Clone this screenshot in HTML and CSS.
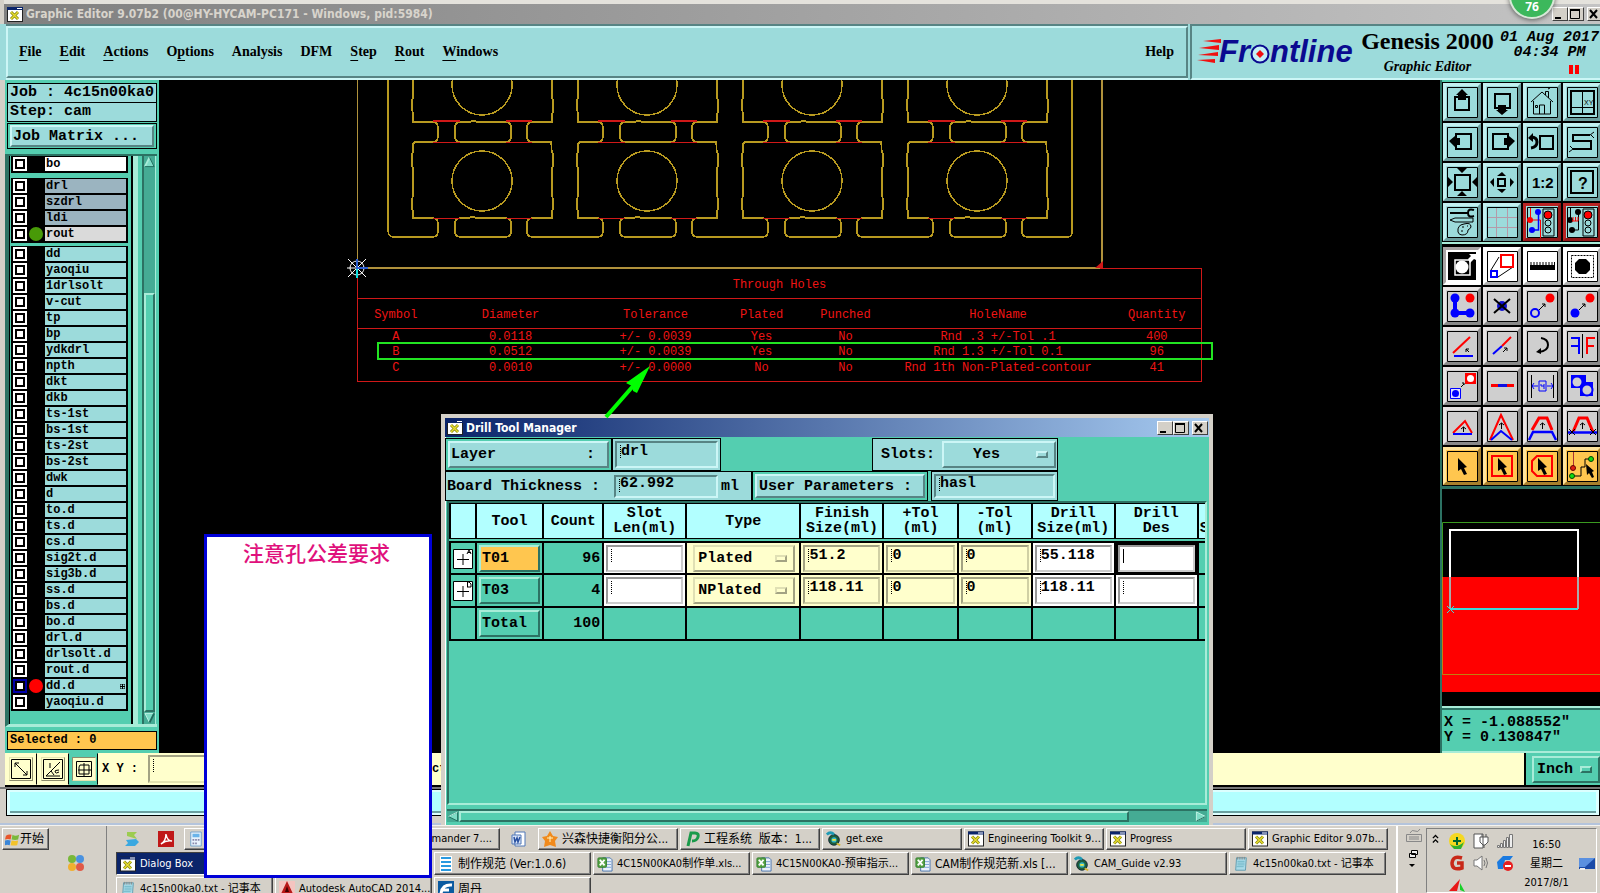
FILE: index.html
```html
<!DOCTYPE html>
<html lang="en">
<head>
<meta charset="utf-8">
<title>Graphic Editor 9.07b2</title>
<link rel="stylesheet" href="styles.css">
</head>
<body>
<svg class="defs" aria-hidden="true">
  <defs>
    <symbol id="xwin" viewBox="0 0 16 15"><rect x=".5" y=".5" width="15" height="14" fill="#fff" stroke="#222"/><rect width="16" height="3" fill="#0a246a"/><rect x="10" y="1" width="5" height="1" fill="#fff"/><path d="M4 5l7 7M11 5l-7 7" stroke="#8a8a10" stroke-width="3"/><path d="M4 5l7 7M11 5l-7 7" stroke="#e6dc30" stroke-width="1.4"/></symbol>
    <symbol id="notepad" viewBox="0 0 16 18"><path d="M3 2h11l-1 14H2z" fill="#a9dbe8" stroke="#5d98ad"/><path d="M4 6h8M4 8h8M4 10h8M3 12h8" stroke="#6fb4c6"/><path d="M4 1v3M6 1v3M8 1v3M10 1v3M12 1v3" stroke="#888"/></symbol>
    <symbol id="excel" viewBox="0 0 17 17"><path d="M6 2h8l2 2v12H6z" fill="#e9f1fb" stroke="#4b75ad"/><path d="M9 6h6M9 9h6M9 12h6" stroke="#7aa0d4"/><rect x="1" y="2" width="9" height="10" rx="1" fill="#5aa548" stroke="#2d7d28"/><path d="M3 4l5 6M8 4l-5 6" stroke="#fff" stroke-width="2"/></symbol>
    <symbol id="gecko" viewBox="0 0 18 18"><circle cx="9" cy="10" r="6" fill="#1d5e3c" stroke="#123" /><circle cx="9" cy="10" r="3" fill="#33b5c9"/><path d="M7 10h4" stroke="#f2e640" stroke-width="2"/><path d="M1 4q4-4 8 0" stroke="#1e9ab5" stroke-width="3" fill="none"/><path d="M12 14l4 2" stroke="#d9b52a" stroke-width="2"/></symbol>
    <g id="cell">
      <path class="route" d="M413 80V98l-1 2v10l1 3V122H432q6 0 6 5V137q0 5-6 5H415l-2 2V152l-1 2v12l1 2V196l-1 3v10l1 2V218H432q6 0 6 5V232q0 5-6 5H426"/>
      <path class="route" d="M552 80V98l1 2v12l-1 2V122H533q-6 0-6 5V137q0 5 6 5H551l1 10l1 2v12l-1 2V196l1 3v10l-1 2V218H533q-6 0-6 5V232q0 5 6 5H540"/>
      <path class="route" d="M461 122h9l2-1h3l2 1H505q6 0 6 5V137q0 5-6 5H461q-6 0-6-5V127q0-5 6-5zM461 218h8l2-1h3l2 1H505q6 0 6 5V232q0 5-6 5H461q-6 0-6-5V223q0-5 6-5z"/>
      <circle class="route" cx="482" cy="85" r="30"/><circle class="route" cx="482" cy="181" r="30"/>
      <path class="cut" d="M433 142H460M506 142H532M433 218H460M506 218H532"/>
      <path class="cut wide" d="M433 121H460M506 121H532"/>
    </g>
  </defs>
</svg>
<div class="desktop">
  <header class="titlebar">
    <svg class="winicon"><use href="#xwin"/></svg>
    <h1>Graphic Editor 9.07b2 (00@HY-HYCAM-PC171 - Windows, pid:5984)</h1>
    <div class="winbtns"><button aria-label="Minimize"><svg viewBox="0 0 12 12"><path d="M2 10h6" stroke-width="2"/></svg></button><button aria-label="Maximize"><svg viewBox="0 0 12 12"><path d="M1.500 2v8.500h9V2" /><path d="M1 2h10" stroke-width="2"/></svg></button><button class="close" aria-label="Close"><svg viewBox="0 0 12 12"><path d="M2 2l7 8M9 2l-7 8" stroke-width="2"/></svg></button></div>
    <div class="bubble">76</div>
  </header>

  <div class="top">
    <nav class="menubar">
      <a href="#"><u>F</u>ile</a><a href="#"><u>E</u>dit</a><a href="#"><u>A</u>ctions</a><a href="#">O<u>p</u>tions</a><a href="#">Analysis</a><a href="#">DFM</a><a href="#"><u>S</u>tep</a><a href="#"><u>R</u>out</a><a href="#"><u>W</u>indows</a><a class="help" href="#">Help</a>
    </nav>
    <div class="brand">
      <svg class="logo" viewBox="0 0 162 34" role="img" aria-label="Frontline">
        <path d="M6 6l18-2v4zM2 13l20-3v5zM1 20l20-3v4zM0 25l18-1v4z" fill="#f01010"/>
        <text x="22" y="27">Fr</text><text x="73" y="27">ntline</text>
        <circle cx="63" cy="19" r="8.500" fill="#c4f0f4" stroke="#0a0a90" stroke-width="2"/><path d="M63 15l4 4-4 4-4-4z" fill="#f01010"/>
      </svg>
      <div class="product"><strong>Genesis 2000</strong><em>Graphic Editor</em></div>
      <div class="date"><span>01 Aug 2017</span><span>04:34 PM</span><svg width="11" height="9"><path d="M0 0h4v9H0zM6 0h4v9H6z" fill="#f00"/></svg></div>
    </div>
  </div>

  <main class="work">
    <aside class="left">
      <div class="job"><p>Job : 4c15n00ka0</p><p>Step: cam</p></div>
      <div class="matrix"><button>Job Matrix ...</button></div>
      <div class="layers">
        <div class="listwrap">
          <ul class="white"><li><label><input type="checkbox"><i></i><span>bo</span></label></li></ul>
          <ul class="drill"><li><label><input type="checkbox"><i></i><span>drl</span></label></li><li><label><input type="checkbox"><i></i><span>szdrl</span></label></li><li><label><input type="checkbox"><i></i><span>ldi</span></label></li><li class="rout"><label><input type="checkbox"><i class="green"></i><span>rout</span></label></li></ul>
          <ul>
            <li><label><input type="checkbox"><i></i><span>dd</span></label></li>
            <li><label><input type="checkbox"><i></i><span>yaoqiu</span></label></li>
            <li><label><input type="checkbox"><i></i><span>1drlsolt</span></label></li>
            <li><label><input type="checkbox"><i></i><span>v-cut</span></label></li>
            <li><label><input type="checkbox"><i></i><span>tp</span></label></li>
            <li><label><input type="checkbox"><i></i><span>bp</span></label></li>
            <li><label><input type="checkbox"><i></i><span>ydkdrl</span></label></li>
            <li><label><input type="checkbox"><i></i><span>npth</span></label></li>
            <li><label><input type="checkbox"><i></i><span>dkt</span></label></li>
            <li><label><input type="checkbox"><i></i><span>dkb</span></label></li>
            <li><label><input type="checkbox"><i></i><span>ts-1st</span></label></li>
            <li><label><input type="checkbox"><i></i><span>bs-1st</span></label></li>
            <li><label><input type="checkbox"><i></i><span>ts-2st</span></label></li>
            <li><label><input type="checkbox"><i></i><span>bs-2st</span></label></li>
            <li><label><input type="checkbox"><i></i><span>dwk</span></label></li>
            <li><label><input type="checkbox"><i></i><span>d</span></label></li>
            <li><label><input type="checkbox"><i></i><span>to.d</span></label></li>
            <li><label><input type="checkbox"><i></i><span>ts.d</span></label></li>
            <li><label><input type="checkbox"><i></i><span>cs.d</span></label></li>
            <li><label><input type="checkbox"><i></i><span>sig2t.d</span></label></li>
            <li><label><input type="checkbox"><i></i><span>sig3b.d</span></label></li>
            <li><label><input type="checkbox"><i></i><span>ss.d</span></label></li>
            <li><label><input type="checkbox"><i></i><span>bs.d</span></label></li>
            <li><label><input type="checkbox"><i></i><span>bo.d</span></label></li>
            <li><label><input type="checkbox"><i></i><span>drl.d</span></label></li>
            <li><label><input type="checkbox"><i></i><span>drlsolt.d</span></label></li>
            <li><label><input type="checkbox"><i></i><span>rout.d</span></label></li>
            <li><label><input type="checkbox" checked><i class="red"></i><span>dd.d<svg width="5" height="5"><path d="M0 0h5v5H0zM2.500 0v5M0 2.500h5" fill="none" stroke="#000"/></svg></span></label></li>
            <li><label><input type="checkbox"><i></i><span>yaoqiu.d</span></label></li>
          </ul>
        </div>
        <div class="vscroll"><svg viewBox="0 0 12 12"><path d="M6 1L1 11H11z" fill="#7fdcc6"/><path d="M6 1L1 11" stroke="#a8ecd8" stroke-width="2"/><path d="M1 11H11L6 1" stroke="#1f6a5a" fill="none"/></svg><div class="trough"><b></b></div><svg viewBox="0 0 12 12"><path d="M1 1H11L6 11z" fill="#7fdcc6"/><path d="M11 1H1L6 11" stroke="#c4f5e8" fill="none"/><path d="M11 1L6 11" stroke="#1f6a5a" stroke-width="2"/></svg></div>
      </div>
      <p class="selected">Selected : 0</p>
    </aside>

    <section class="canvas" aria-label="Board view">
      <table class="holes">
        <colgroup><col class="h1"><col class="h2"><col class="h3"><col class="h4"><col class="h5"><col class="h6"><col class="h7"></colgroup>
        <thead><tr><th colspan="7">Through Holes</th></tr><tr><th>Symbol</th><th>Diameter</th><th>Tolerance</th><th>Plated</th><th>Punched</th><th>HoleName</th><th>Quantity</th></tr></thead>
        <tbody><tr><td>A</td><td>0.0118</td><td>+/- 0.0039</td><td>Yes</td><td>No</td><td>Rnd .3 +/-Tol .1</td><td>400</td></tr><tr><td>B</td><td>0.0512</td><td>+/- 0.0039</td><td>Yes</td><td>No</td><td>Rnd 1.3 +/-Tol 0.1</td><td>96</td></tr><tr><td>C</td><td>0.0010</td><td>+/- 0.0000</td><td>No</td><td>No</td><td>Rnd 1th Non-Plated-contour</td><td>41</td></tr></tbody>
      </table>
      <svg class="board"><g transform="translate(-159 -80)">
        <path class="panel thin" d="M357.500 80V264"/><path class="panel" d="M358 268H1097q5 0 5-5V80"/>
        <path d="M1095 268h8v-7z" fill="#d01818"/>
        <path class="route" d="M388 80V230q0 7 5 7H428M538 237H594M703 237H759M868 237H924M1033 237H1067q5 0 5-5V80"/>
        <use href="#cell"/><use href="#cell" x="165"/><use href="#cell" x="330"/><use href="#cell" x="495"/>
        <g fill="none"><circle cx="357" cy="268" r="7" stroke="#fff"/><path d="M348 259l18 18M366 259l-18 18M347 268h10" stroke="#fff"/><path d="M357 268v10" stroke="#10e0e0" stroke-width="2"/><path d="M357 259v9h11" stroke="#3060d0" stroke-width="2"/></g>
      </g></svg>
    </section>

    <aside class="right">
      <div class="tools view">
        <button aria-label="Pan up"><svg viewBox="3 3 32 32"><path class="fr" d="M4.500 4.500h30v30h-30z"/><path class="k2" d="M12 14h14v13H12z"/><path class="f" d="M19 6l6 6h-2v5h-8v-5h-2z"/></svg></button>
        <button aria-label="Pan down"><svg viewBox="3 3 32 32"><path class="fr" d="M4.500 4.500h30v30h-30z"/><path class="k2" d="M12 11h15v14H12z"/><path class="f" d="M15 22h8v5h2l-6 5-6-5h2z"/></svg></button>
        <button aria-label="Home"><svg viewBox="3 3 32 32"><path class="fr" d="M4.500 4.500h30v30h-30z"/><path class="k" d="M8 19L19 9l11 10M10.500 18v13h17V18M16.500 31v-9h5v9M12.500 22.500h2v2h-2zM22.500 12V8.500h3V15M25 6l2-1"/></svg></button>
        <button aria-label="Zoom XY"><svg viewBox="3 3 32 32"><path class="fr" d="M4.500 4.500h30v30h-30z"/><path class="k2" d="M8 8h23v23H8z"/><path class="k" d="M19.500 8v23M8 24.500h23"/><text class="tiny" x="21" y="22">XY</text></svg></button>
        <button aria-label="Pan left"><svg viewBox="3 3 32 32"><path class="fr" d="M4.500 4.500h30v30h-30z"/><path class="k2" d="M13 11h15v15H13z"/><path class="f" d="M6 18l6-5v2h5v7h-5v2z"/></svg></button>
        <button aria-label="Pan right"><svg viewBox="3 3 32 32"><path class="fr" d="M4.500 4.500h30v30h-30z"/><path class="k2" d="M10 11h15v15H10z"/><path class="f" d="M32 18l-6-5v2h-5v7h5v2z"/></svg></button>
        <button aria-label="Previous view"><svg viewBox="3 3 32 32"><path class="fr" d="M4.500 4.500h30v30h-30z"/><path class="k2" d="M17 13h13v13H17z"/><path d="M8 14q6 0 6 5t-6 6" fill="none" stroke="#000" stroke-width="3"/><path class="f" d="M5 15l5-5v9z"/></svg></button>
        <button aria-label="Snake"><svg viewBox="3 3 32 32"><path class="fr" d="M4.500 4.500h30v30h-30z"/><path class="k2" d="M10 26H28V18H10V12H27"/><path class="k" d="M27 12l4-3M28 12l3 3M10 26l-4 3M10 26l-3-3"/></svg></button>
        <button aria-label="Fit"><svg viewBox="3 3 32 32"><path class="fr" d="M4.500 4.500h30v30h-30z"/><path class="k2" d="M12 12h15v15H12z"/><path class="f" d="M14 5h10l-5 5zM14 33h10l-5-5zM5 14v10l5-5zM34 14v10l-5-5z"/></svg></button>
        <button aria-label="Zoom out"><svg viewBox="3 3 32 32"><path class="fr" d="M4.500 4.500h30v30h-30z"/><path class="k2" d="M15 16h7v7h-7z"/><path class="f" d="M14 13h9l-4-4zM14 26h9l-4 4zM11 15v9l-4-5zM27 15v9l4-5z"/></svg></button>
        <button aria-label="Scale 1:2"><svg viewBox="3 3 32 32"><path class="fr" d="M4.500 4.500h30v30h-30z"/><text class="ratio" x="9" y="25">1:2</text></svg></button>
        <button aria-label="Help"><svg viewBox="3 3 32 32"><path class="fr" d="M4.500 4.500h30v30h-30z"/><path class="k2" d="M8 8h22v22H8z"/><text class="quest" x="15" y="26">?</text></svg></button>
        <button aria-label="Settings"><svg viewBox="3 3 32 32"><path class="fr" d="M4.500 4.500h30v30h-30z"/><path class="k2" d="M7 10h18M31 7q-6-2-6 3t6 3"/><path class="k" d="M7 17l5-2h18v4H12zM15 29q-1-7 6-8 7-2 7 3-1 2-3 3 0 5-6 5-3 0-4-3M18 28h2M19 24h2M24 23h1"/></svg></button>
        <button aria-label="Grid"><svg viewBox="3 3 32 32"><path class="fr" d="M4.500 4.500h30v30h-30z"/><path d="M13.500 5v29M24.500 5v29M5 14.500h29M5 24.500h29" stroke="#b59aa8"/></svg></button>
        <button class="alert" aria-label="Online check"><svg viewBox="3 3 32 32"><path class="fr" d="M4.500 4.500h30v30h-30z"/><path d="M7.500 5v12h10v18" fill="none" stroke="#f00"/><circle cx="7" cy="17" r="3" fill="#f00"/><path d="M15.500 9v18h-6" fill="none" stroke="#00f" stroke-width="1.500"/><circle cx="15" cy="9" r="3" fill="#00f"/><circle cx="9" cy="27" r="3" fill="#00f"/><path class="k" d="M20 6h11v27H20z"/><circle cx="25" cy="12" r="4" fill="#f00" stroke="#000"/><circle class="k" cx="25" cy="20" r="3"/><circle class="k" cx="25" cy="27" r="3"/></svg></button>
        <button class="alert" aria-label="Net check"><svg viewBox="3 3 32 32"><path class="fr" d="M4.500 4.500h30v30h-30z"/><path class="k" d="M7.500 5v12M15.500 9v18h-6"/><circle cx="7" cy="17" r="3"/><circle cx="15" cy="9" r="3"/><circle cx="9" cy="27" r="3"/><path d="M9 18h6v-4M10 14v4M12.500 14v4" stroke="#f00" fill="none"/><path class="k" d="M20 6h11v27H20z"/><circle cx="25" cy="12" r="4" fill="#f00" stroke="#000"/><circle class="k" cx="25" cy="20" r="3"/><circle class="k" cx="25" cy="27" r="3"/></svg></button>
      </div>
      <div class="tools edit">
        <button class="w active" aria-label="Zoom window"><svg viewBox="3 3 32 32"><path d="M5 5h28v28H5z"/><path d="M12 13h15v15H12z" fill="#000" stroke="#fff" stroke-width="1.500"/><circle cx="19" cy="20" r="6.500" fill="#fff"/><path d="M25 12l3-3-2-2h7v6l-2-1-4 4z" fill="#fff"/></svg></button>
        <button class="w" aria-label="Scale"><svg viewBox="3 3 32 32"><path class="fr" d="M4.500 4.500h30v30h-30z"/><path class="k" d="M8 23l8-13M15 30l15-10"/><path class="r2" d="M18 8h12v12H18z"/><path class="b2" d="M8 24h6v6H8z"/></svg></button>
        <button class="w" aria-label="Measure"><svg viewBox="3 3 32 32"><path class="fr" d="M4.500 4.500h30v30h-30z"/><path d="M7 18h25v5H7z"/><path d="M8 15v4M11 15v4M14 15v4M17 15v4M20 15v4M23 15v4M26 15v4M29 15v4M31.500 15v4" stroke="#000"/></svg></button>
        <button class="w" aria-label="Feature select"><svg viewBox="3 3 32 32"><path class="fr" d="M4.500 4.500h30v30h-30z"/><path class="k" d="M8.500 8.500h22v22h-22z" stroke-dasharray="2 1"/><path d="M16 12h7l4 4v7l-4 4h-7l-4-4v-7z"/></svg></button>
        <button aria-label="Add"><svg viewBox="3 3 32 32"><path class="fr" d="M4.500 4.500h30v30h-30z"/><path d="M12 11v15h15" fill="none" stroke="#00f" stroke-width="4"/><circle cx="12" cy="11" r="4.500" fill="#00f"/><circle cx="12" cy="26" r="4.500" fill="#00f"/><circle cx="27" cy="26" r="4.500" fill="#00f"/><circle cx="27" cy="11" r="4.500" fill="#f00"/></svg></button>
        <button aria-label="Delete"><svg viewBox="3 3 32 32"><path class="fr" d="M4.500 4.500h30v30h-30z"/><circle cx="19" cy="19" r="5" fill="#1010d0"/><path class="k2" d="M11 12l16 14M27 12l-16 14"/></svg></button>
        <button aria-label="Move"><svg viewBox="3 3 32 32"><path class="fr" d="M4.500 4.500h30v30h-30z"/><circle class="b2" cx="12" cy="26" r="4"/><circle cx="27" cy="11" r="4.500" fill="#f00"/><path class="k" d="M16 23l6-6M19 17h3v3"/></svg></button>
        <button aria-label="Copy"><svg viewBox="3 3 32 32"><path class="fr" d="M4.500 4.500h30v30h-30z"/><circle cx="12" cy="26" r="4.500" fill="#00f"/><circle cx="27" cy="11" r="4.500" fill="#f00"/><path class="k" d="M16 23l6-6M19 17h3v3"/></svg></button>
        <button aria-label="Rotate line"><svg viewBox="3 3 32 32"><path class="fr" d="M4.500 4.500h30v30h-30z"/><path class="b2" d="M11 29h19"/><path class="r2" d="M10 26L27 10"/><path class="k" d="M26 25l-3-3M23 25v-3h3"/></svg></button>
        <button aria-label="Extend"><svg viewBox="3 3 32 32"><path class="fr" d="M4.500 4.500h30v30h-30z"/><path class="b2" d="M10 27l9-8"/><path class="r2" d="M19 19l9-9"/><path class="k" d="M20 25l4-4M21 21h3v3"/></svg></button>
        <button aria-label="Rotate"><svg viewBox="3 3 32 32"><path class="fr" d="M4.500 4.500h30v30h-30z"/><path class="k2" d="M18 11q7 1 7 7t-9 7"/><path d="M13 25l5-4v6z"/></svg></button>
        <button aria-label="Mirror"><svg viewBox="3 3 32 32"><path class="fr" d="M4.500 4.500h30v30h-30z"/><path class="b2" d="M8 11h8v16M8 19h8"/><path class="r2" d="M32 11h-8v16M31 19h-7"/><path class="k" d="M19.500 7v24"/></svg></button>
        <button aria-label="Change symbol"><svg viewBox="3 3 32 32"><path class="fr" d="M4.500 4.500h30v30h-30z"/><path d="M22 6h11v11H22z" fill="#f00"/><circle cx="27.500" cy="11.500" r="3.500" fill="#fff"/><path d="M7.500 21.500h10v10h-10z" fill="#e0e0ff" stroke="#00f"/><circle cx="12.500" cy="26.500" r="3.500" fill="#00f"/><path class="k" d="M18 20l3-3M19 16h2v2"/></svg></button>
        <button aria-label="Join"><svg viewBox="3 3 32 32"><path class="fr" d="M4.500 4.500h30v30h-30z"/><path d="M8 18.500h23" stroke="#f00" stroke-width="3"/><path d="M15 18.500h9" stroke="#1010e0" stroke-width="3"/></svg></button>
        <button aria-label="Spacing"><svg viewBox="3 3 32 32"><path class="fr" d="M4.500 4.500h30v30h-30z"/><path class="k" d="M8.500 8v23M30.500 8v23"/><path d="M9 19h6M24 19h6M11 16l-2 3 2 3M28 16l2 3-2 3M16 14h7v10h-7zM18 17v2h3M21 17v5" stroke="#00f" fill="none"/></svg></button>
        <button aria-label="Merge"><svg viewBox="3 3 32 32"><path class="fr" d="M4.500 4.500h30v30h-30z"/><path d="M8 8h15v7h7v14H17v-8H8z" fill="#00f"/><circle cx="14" cy="15" r="4.500" fill="#d0d0d0"/><circle cx="24" cy="23" r="5.500" fill="#d0d0d0" stroke="#00f" stroke-width="2"/></svg></button>
        <button aria-label="Triangle"><svg viewBox="3 3 32 32"><path class="fr" d="M4.500 4.500h30v30h-30z"/><path d="M10 26L22 14l7 12" fill="none" stroke="#f00" stroke-width="2"/><path class="b2" d="M10 27h19"/><path class="k" d="M20.500 25v-5M18 22l2.500-2 2.500 2"/></svg></button>
        <button aria-label="Peak"><svg viewBox="3 3 32 32"><path class="fr" d="M4.500 4.500h30v30h-30z"/><path d="M7 33L18 8l12 25" fill="none" stroke="#f00" stroke-width="2"/><path class="b2" d="M8 33l10-9 11 9"/><path class="k" d="M18.500 22v-6M16 18l2.500-2 2.500 2"/></svg></button>
        <button aria-label="Trapezoid"><svg viewBox="3 3 32 32"><path class="fr" d="M4.500 4.500h30v30h-30z"/><path d="M9 23l7-12h8l5 12" fill="none" stroke="#f00" stroke-width="3"/><path d="M6 33l4-8h19l4 8" stroke="#00f" stroke-width="2.500" fill="none"/><path class="k" d="M19.500 22v-6M17 18l2.500-2 2.500 2"/></svg></button>
        <button aria-label="Trapezoid base"><svg viewBox="3 3 32 32"><path class="fr" d="M4.500 4.500h30v30h-30z"/><path d="M10 25l6-14h8l6 14" fill="none" stroke="#f00" stroke-width="3"/><path d="M5 25.500h29" stroke="#00f" stroke-width="2.500"/><path class="k" d="M19.500 22v-6M17 18l2.500-2 2.500 2M6 22l6 6M12 22l-6 6M27 22l6 6M33 22l-6 6"/></svg></button>
        <button class="o" aria-label="Select"><svg viewBox="3 3 32 32"><path class="fr" d="M4.500 4.500h30v30h-30z"/><path d="M15 11l9 9-3 1 3 6-3 1-3-6-3 2z"/></svg></button>
        <button class="o" aria-label="Select in frame"><svg viewBox="3 3 32 32"><path class="fr" d="M4.500 4.500h30v30h-30z"/><path class="r2" d="M9 9h20v20H9z"/><path d="M15 11l9 9-3 1 3 6-3 1-3-6-3 2z"/></svg></button>
        <button class="o" aria-label="Select in polygon"><svg viewBox="3 3 32 32"><path class="fr" d="M4.500 4.500h30v30h-30z"/><path class="r2" d="M14 9h15v20H14l-5-5V14z"/><path d="M15 11l9 9-3 1 3 6-3 1-3-6-3 2z"/></svg></button>
        <button class="o" aria-label="Select net"><svg viewBox="3 3 32 32"><path class="fr" d="M4.500 4.500h30v30h-30z"/><path d="M10.500 5v15" stroke="#a33"/><path class="k" d="M10 29h8v-9h4v-8h6"/><circle cx="10" cy="21" r="2.500" fill="#e02010" stroke="#600"/><circle cx="9" cy="29" r="2.500" fill="#1d1" stroke="#040"/><circle cx="28" cy="12" r="2.500" fill="#1d1" stroke="#040"/><path d="M23 17l8 7-2 1 2 5-2 1-3-5-2 2z"/></svg></button>
      </div>
      <div class="overview"><svg><path d="M0 88h160v115H0z" fill="#f00"/><path d="M160 33.500H.5V88" fill="none" stroke="#3a9a20"/><path d="M.5 88v97.500H160" fill="none" stroke="#c08010"/><path d="M8 88V41h128v47" fill="none" stroke="#fff" stroke-width="2"/><path d="M8 88v32M136 88v32" stroke="#aaa" stroke-width="2"/><path d="M8 120h128" stroke="#40d8d8" stroke-width="2"/><path d="M5 117l7 7M12 117l-7 7" stroke="#40d8d8"/></svg></div>
      <div class="coords"><span>X = -1.088552"</span><span>Y = 0.130847"</span></div>
    </aside>
  </main>

  <div class="xybar">
    <button aria-label="Absolute"><svg viewBox="0 0 20 20"><path class="k" d="M.5.5h19v19H.5zM4 4l12 12M4 8V4h4M16 12v4h-4"/></svg></button>
    <button aria-label="Polar"><svg viewBox="0 0 20 20"><path class="k" d="M.5.5h19v19H.5zM3 17L17 3M3 17h14M7 4v5M8 12l3 4M16 11q-5 0-4 2t4 0"/></svg></button>
    <button class="on" aria-label="Grid snap"><svg viewBox="0 0 20 20"><path class="k" d="M2.500 2.500h15v15h-15zM6 6h9v9H5V8zM10 4v13M4 11h13"/></svg></button>
    <label for="xy">X Y :</label><input id="xy" type="text"><span class="hint">ct</span>
    <div class="unit"><span class="pick"><select aria-label="Unit"><option>Inch</option></select></span></div>
  </div>
  <div class="msg"><div></div></div>

  <footer class="taskbar">
    <div class="start"><button><svg viewBox="0 0 16 16"><path d="M1 4q3-2 6-1L6 8Q3 7 0 8z" fill="#e8562a"/><path d="M8 3q3 2 7 0l-1 5q-3 1-7 0z" fill="#7ab83a"/><path d="M0 9q3-1 6 0l-1 5q-3-1-5 0z" fill="#3a86d8"/><path d="M7 9q4 1 7 0l-1 5q-4 1-7 0z" fill="#f2c22a"/></svg>开始</button><svg class="orbs" viewBox="0 0 18 18"><circle cx="5" cy="5" r="4" fill="#78b83a"/><circle cx="13" cy="5" r="4" fill="#4a92e0"/><circle cx="5" cy="13" r="4" fill="#f0b030"/><circle cx="13" cy="13" r="4" fill="#e05a48"/></svg></div>
    <div class="tasks">
      <div class="row"><div class="quick"><svg viewBox="0 0 16 16"><path d="M3 1h10l-3 3 3 4-10-3z" fill="#9ccc50"/><path d="M2 9l10-1 3 3-4 4H1l3-3z" fill="#3aa8e0"/></svg><svg viewBox="0 0 16 16"><path d="M0 0h16v16H0z" fill="#c01818"/><path d="M3 13q5-3 5-10 1 7 6 7-6-1-11 3" fill="none" stroke="#fff" stroke-width="1.500"/></svg></div>
        <button class="calc" aria-label="Calculator"><svg viewBox="0 0 16 18"><path d="M2 1h12v16H2z" fill="#e8f2fc" stroke="#6a9cc8"/><path d="M4 3h8v4H4z" fill="#6ab4ea"/><path d="M4 9h2v2H4zM7 9h2v2H7zM10 9h2v2h-2zM4 13h2v2H4zM7 13h2v2H7z" fill="#88a"/></svg></button>
        <button class="cmd en">mander 7....</button>
        <svg class="word" viewBox="0 0 16 16"><path d="M4 1h10v14H4z" fill="#fff" stroke="#5078b8"/><path d="M1 4h9v9H1z" fill="#d8e4f8" stroke="#5078b8"/><path d="M3 6l1 5 2-4 1 4 2-5" fill="none" stroke="#2850a0" stroke-width="1.500"/></svg>
        <button class="t"><svg viewBox="0 0 16 16"><path d="M8 0l3 5 5 1-3 4 1 6-6-2-6 2 1-6-3-4 5-1z" fill="#f08a1c"/><path d="M5 7h6M8 5v6" stroke="#fff6c0"/></svg><span>兴森快捷衡阳分公...</span></button>
        <button class="t"><svg viewBox="0 0 16 16"><path d="M4 15L7 2h4q4 0 3 4t-6 4" fill="none" stroke="#1a9a4a" stroke-width="3"/></svg><span>工程系统&nbsp; 版本：1...</span></button>
        <button class="t en"><svg><use href="#gecko"/></svg><span>get.exe</span></button>
        <button class="t en"><svg><use href="#xwin"/></svg><span>Engineering Toolkit 9...</span></button>
        <button class="t en"><svg><use href="#xwin"/></svg><span>Progress</span></button>
        <button class="t en"><svg><use href="#xwin"/></svg><span>Graphic Editor 9.07b...</span></button></div>
      <div class="row"><button class="t wide dark en"><svg><use href="#xwin"/></svg><span>Dialog Box</span></button><button class="t wide" aria-label="Window"></button>
        <button class="t wide"><svg viewBox="0 0 16 16"><path d="M2 0h12v16H2z" fill="#fff"/><path d="M3 2h10M3 6h10M3 10h10M3 14h10" stroke="#2a9ae0" stroke-width="2"/></svg><span>制作规范 (Ver:1.0.6)</span></button>
        <button class="t wide en"><svg><use href="#excel"/></svg><span>4C15N00KA0制作单.xls...</span></button>
        <button class="t wide en"><svg><use href="#excel"/></svg><span>4C15N00KA0-预审指示...</span></button>
        <button class="t wide"><svg><use href="#excel"/></svg><span>CAM制作规范新.xls [...</span></button>
        <button class="t wide en"><svg><use href="#gecko"/></svg><span>CAM_Guide v2.93</span></button>
        <button class="t wide en"><svg><use href="#notepad"/></svg><span>4c15n00ka0.txt - 记事本</span></button></div>
      <div class="row"><button class="t wide en"><svg><use href="#notepad"/></svg><span>4c15n00ka0.txt - 记事本</span></button><button class="t wide en"><svg viewBox="0 0 16 16"><path d="M0 0h16v16H0z" fill="#f4c4c0"/><path d="M8 0l7 15-6-3-8 3z" fill="#b81818"/><path d="M8 5l2 6H6z" fill="#400"/></svg><span>Autodesk AutoCAD 2014...</span></button><button class="t wide"><svg viewBox="0 0 16 16"><path d="M0 0h16v16H0z" fill="#0a5aa0"/><path d="M3 13q1-10 11-9M4 9h7" stroke="#fff" stroke-width="3" fill="none"/></svg><span>周丹</span></button></div>
    </div>
    <div class="ime"><svg viewBox="0 0 16 40"><path d="M.5 6.500h15v7H.5zM3 9h10M3 11h10M4 5q2-4 5-2t5-2" fill="none" stroke="#888"/><path d="M5.500 22.500h6v4h-6zM3.500 25.500h6v4h-6z" fill="#eee" stroke="#000"/><path d="M3 36h6l-3 3z"/></svg></div>
    <div class="tray">
      <svg class="chev" viewBox="0 0 8 10"><path d="M1 4l3-3 3 3M1 9l3-3 3 3" fill="none" stroke="#000" stroke-width="1.500"/></svg>
      <div class="icons">
        <svg viewBox="0 0 18 18"><circle cx="9" cy="9" r="8" fill="#f5d820"/><path d="M2 12q6 5 14-2l-3 7H6z" fill="#30b030"/><path d="M9 5v8M5 9h8" stroke="#063" stroke-width="2"/></svg>
        <svg viewBox="0 0 18 18"><path d="M2 2h9v14H2zM8 5h8v5l-3 3h-2l-3-3zM10 2v3M14 2v3M12 13v3" fill="#fff" stroke="#555"/></svg>
        <svg viewBox="0 0 18 18"><path d="M1.500 13.500h2v2h-2zM4.500 11.500h2v4h-2zM7.500 8.500h2v7h-2zM10.500 5.500h2v10h-2zM13.500 2.500h3v13h-3z" fill="#eee" stroke="#777"/></svg>
        <svg viewBox="0 0 18 18"><path d="M14 4Q5 1 4 9q0 8 10 5V9H9" fill="none" stroke="#c82818" stroke-width="3.500"/></svg>
        <svg viewBox="0 0 18 18"><path d="M2 6h3l5-4v14l-5-4H2z" fill="#fff" stroke="#777"/><path d="M12 6q2 3 0 6M14 4q3 5 0 10" fill="none" stroke="#777"/></svg>
        <svg viewBox="0 0 18 18"><path d="M1 8L7 2h10l-3 4H9L7 15H2z" fill="#1a7ae0"/><circle cx="12" cy="12" r="5" fill="#e82020"/><path d="M9 12h6" stroke="#fff" stroke-width="2"/></svg>
        <svg viewBox="0 0 18 18"><path d="M1 15L12 3 9 15z" fill="#e81818"/><path d="M12 7l5 9-5-2z" fill="#18d028"/></svg>
      </div>
      <div class="clock"><span>16:50</span><span>星期二</span><span>2017/8/1</span></div>
      <svg class="mon" viewBox="0 0 16 14"><path d="M0 1h16v11H0z" fill="#1a4aa8"/><path d="M0 1h16L6 10H0z" fill="#5a90e0"/><path d="M1 11h5v2H1z" fill="#eee"/></svg>
    </div>
  </footer>

  <section class="dialog" aria-label="Drill Tool Manager">
    <header class="dtitle"><svg class="winicon"><use href="#xwin"/></svg><h2>Drill Tool Manager</h2><div class="winbtns"><button aria-label="Minimize"><svg viewBox="0 0 12 12"><path d="M2 10h6" stroke-width="2"/></svg></button><button aria-label="Maximize"><svg viewBox="0 0 12 12"><path d="M1.500 2v8.500h9V2"/><path d="M1 2h10" stroke-width="2"/></svg></button><button class="close" aria-label="Close"><svg viewBox="0 0 12 12"><path d="M2 2l7 8M9 2l-7 8" stroke-width="2"/></svg></button></div></header>
    <div class="dbody">
      <div class="params">
        <div class="prow"><div class="box greenbox layerbox"><button class="motif"><span>Layer</span><span>:</span></button></div><div class="box layerval"><input type="text" aria-label="Layer" value="drl"></div><div class="box slots"><label for="slots">Slots:</label><span class="pick"><select id="slots"><option>Yes</option></select></span></div></div>
        <div class="prow second"><div class="box thick"><label for="bt">Board Thickness :</label><input id="bt" type="text" value="62.992"><span>ml</span></div><div class="box greenbox user"><button class="motif">User Parameters :</button></div><div class="box userval"><input type="text" aria-label="User Parameters" value="hasl"></div></div>
      </div>
      <div class="gridview">
        <table class="grid">
          <colgroup><col class="g1"><col class="g2"><col class="g3"><col class="g4"><col class="g5"><col class="g4"><col class="g6"><col class="g6"><col class="g4"><col class="g4"><col class="g4"></colgroup>
          <thead><tr><th></th><th>Tool</th><th>Count</th><th>Slot<br>Len(ml)</th><th>Type</th><th>Finish<br>Size(ml)</th><th>+Tol<br>(ml)</th><th>-Tol<br>(ml)</th><th>Drill<br>Size(ml)</th><th>Drill<br>Des</th><th class="cut-off"><br>Source</th></tr></thead>
          <tbody>
            <tr><td><svg class="sym" viewBox="0 0 20 20"><path d="M.5.5h19v19H.5z" fill="#fff" stroke="#000"/><path class="k" d="M10 5v11M4 10.500h12M14 5l2-4 2 4M15 3.500h3"/></svg></td><td><button class="motif sel">T01</button></td><td class="num">96</td><td class="wh"><input type="text" aria-label="Slot length T01"></td><td class="ye"><span class="pick"><select aria-label="Type T01"><option>Plated</option></select></span></td><td class="ye"><input type="text" aria-label="Finish size T01" value="51.2"></td><td class="ye"><input type="text" aria-label="Plus tolerance T01" value="0"></td><td class="ye"><input type="text" aria-label="Minus tolerance T01" value="0"></td><td class="wh"><input type="text" aria-label="Drill size T01" value="55.118"></td><td class="focus"><input type="text" aria-label="Drill designator T01"></td><td></td></tr>
            <tr><td><svg class="sym" viewBox="0 0 20 20"><path d="M.5.500h19v19H.5z" fill="#fff" stroke="#000"/><path class="k" d="M10 5v11M4 10.500h12M14.500 1v5M14 1h2l2 2v3h-4"/></svg></td><td><button class="motif">T03</button></td><td class="num">4</td><td class="wh"><input type="text" aria-label="Slot length T03"></td><td class="ye"><span class="pick"><select aria-label="Type T03"><option>NPlated</option></select></span></td><td class="ye"><input type="text" aria-label="Finish size T03" value="118.11"></td><td class="ye"><input type="text" aria-label="Plus tolerance T03" value="0"></td><td class="ye"><input type="text" aria-label="Minus tolerance T03" value="0"></td><td class="wh"><input type="text" aria-label="Drill size T03" value="118.11"></td><td class="wh"><input type="text" aria-label="Drill designator T03"></td><td></td></tr>
            <tr><td></td><td><button class="motif">Total</button></td><td class="num">100</td><td></td><td></td><td></td><td></td><td></td><td></td><td></td><td></td></tr>
          </tbody>
        </table>
      </div>
      <div class="hscroll"><svg viewBox="0 0 12 12"><path d="M11 1L1 6l10 5z" fill="#7fdcc6" stroke="#1f6a5a"/><path d="M11 1L1 6" stroke="#c4f5e8"/></svg><div class="trough"><b></b></div><svg viewBox="0 0 12 12"><path d="M1 1l10 5-10 5z" fill="#7fdcc6" stroke="#c4f5e8"/><path d="M1 11l10-5" stroke="#1f6a5a"/></svg></div>
    </div>
  </section>

  <div class="note">注意孔公差要求</div>
  <svg class="marks" aria-hidden="true"><path d="M378 343h834v16H378z" fill="none" stroke="#22e422" stroke-width="2"/><path d="M606 417L634 385" stroke="#0f0" stroke-width="4"/><path d="M650 366l-24 17 6 3 1 5 4 2z" fill="#0f0"/></svg>
</div>
</body>
</html>
```

FILE: styles.css
```css
*, *::after { box-sizing: border-box; }
:root {
  --cyan: #9cdbdb; --cyan-l: #ccf6f6; --cyan-d: #578484;
  --green: #54ceb0; --green-l: #a8ecd8; --green-d: #2c7263;
  --pale: #b2ffff; --yellow: #ffffcc; --yellow-d: #a3a383; --orange: #ffc64f; --face: #d4d0c8;
}
body { margin: 0; background: #000; overflow: hidden; }
body, button, input, select { font: bold 15px/15px "Liberation Mono", monospace; color: #000; }
button, input, select { margin: 0; padding: 0; border: 0; border-radius: 0; background: none; outline: 0; }
button { cursor: pointer; }
p, h1, h2, ul { margin: 0; padding: 0; }
svg { display: block; overflow: hidden; }
.defs { position: absolute; width: 0; height: 0; }
.k { fill: none; stroke: #000; stroke-width: 1; }
.k2 { fill: none; stroke: #000; stroke-width: 2; }
.r2 { fill: none; stroke: #f00; stroke-width: 2; }
.b2 { fill: none; stroke: #00f; stroke-width: 2; }
.fr { fill: none; stroke: #000; }

.desktop { position: relative; display: flex; flex-direction: column; height: 100vh; min-width: 1280px; background: var(--face); overflow: hidden; }

/* title bars */
.titlebar { position: relative; display: flex; align-items: center; height: 24px; padding: 0 0 0 3px; margin: 0 0 0 4px; border-top: 4px solid #e4e2dc; background: linear-gradient(90deg, #808080, #c4c4c4); flex: none; }
.winicon { width: 16px; height: 15px; flex: none; }
.titlebar h1, .dtitle h2 { margin-left: 3px; font: bold 12px/16px "DejaVu Sans Condensed", "Noto Sans", sans-serif; color: #d8d4cc; white-space: nowrap; }
.winbtns { display: flex; margin-left: auto; }
.titlebar .winbtns { margin-right: -3px; }
.winbtns button { width: 16px; height: 14px; background: var(--face); border: 1px solid; border-color: #fff #404040 #404040 #fff; }
.winbtns svg { width: 12px; height: 12px; fill: none; stroke: #000; }
.winbtns .close { margin-left: 3px; }
.bubble { position: absolute; right: 45px; top: -30px; width: 46px; height: 45px; border-radius: 50%; border: 2px solid #d8e8d8; background: #3cb85c; box-shadow: 0 1px 5px #0008; color: #fff; font: bold 12px/14px "Noto Sans", sans-serif; text-align: center; padding-top: 24px; z-index: 3; }

/* menu and brand */
.top { display: flex; height: 56px; padding-left: 6px; flex: none; background: var(--cyan); }
.menubar { flex: 1; display: flex; align-items: center; gap: 18px; padding: 0 12px 0 11px; border: 2px solid; border-color: var(--cyan-l) var(--cyan-d) var(--cyan-d) var(--cyan-l); box-shadow: 0 -2px 0 var(--cyan-d), 0 2px 0 var(--cyan-l); margin: 2px 2px 2px 0; }
.menubar a { color: #000; text-decoration: none; font: bold 14px/20px "Liberation Serif", serif; }
.menubar u { text-underline-offset: 4px; text-decoration-thickness: 1px; }
.menubar .help { margin-left: auto; }
.brand { display: flex; width: 410px; padding-left: 5px; border-left: 2px solid var(--cyan-d); border-top: 2px solid var(--cyan-d); border-bottom: 2px solid var(--cyan-l); }
.logo { width: 162px; height: 34px; margin-top: 9px; flex: none; }
.logo text { font: italic bold 31px "Liberation Sans", sans-serif; fill: #0a0a90; }
.product { width: 137px; display: flex; flex-direction: column; align-items: center; padding-top: 2px; flex: none; font-family: "Liberation Serif", serif; white-space: nowrap; }
.product strong { font: bold 24px/26px "Liberation Serif", serif; }
.product em { font: italic bold 14px/25px "Liberation Serif", serif; }
.date { display: flex; flex-direction: column; align-items: center; font: italic bold 15px/15px "Liberation Mono", monospace; padding-top: 4px; margin-left: 4px; white-space: nowrap; }
.date svg { margin-top: 5px; align-self: end; margin-right: 19px; }

/* workspace */
.work { flex: 1; min-height: 0; display: flex; background: #000; }
.left { width: 159px; flex: none; display: flex; flex-direction: column; padding: 3px 2px 3px 7px; background: var(--green); border-left: 0; box-shadow: inset 5px 0 0 var(--face); }
.job { border: 1px solid #000; background: var(--cyan); }
.job p { height: 18px; line-height: 17px; padding-left: 2px; }
.job p + p { border-top: 1px solid #000; height: 19px; }
.matrix { margin-top: 1px; border: 1px solid #000; padding: 1px 2px; }
.matrix button { display: block; width: 100%; height: 22px; padding-left: 1px; text-align: left; background: var(--cyan); border: 2px solid; border-color: var(--cyan-l) var(--cyan-d) var(--cyan-d) var(--cyan-l); }
.layers { flex: 1; min-height: 0; display: flex; margin: 5px 0 4px -2px; gap: 4px; border-left: 4px solid var(--green-d); border-top: 2px solid var(--green-d); border-bottom: 3px solid var(--green-l); }
.listwrap { width: 129px; border-right: 5px solid var(--green-l); padding: 0 0 0 2px; }
.listwrap { box-shadow: inset -2px 0 0 #000, inset 1px 0 0 #000; }
.listwrap ul { width: 117px; list-style: none; background: #000; margin-bottom: 5px; padding-top: 1px; }
.listwrap .drill { margin-bottom: 3px; }
.listwrap li { height: 16px; }
.listwrap label { display: flex; height: 14px; }
.listwrap input { appearance: none; width: 14px; height: 14px; margin-left: 2px; border: 2px solid #fff; background: #fff; box-shadow: inset 0 0 0 2px #000; flex: none; }
.listwrap input:checked { border-color: #00a; }
.listwrap i { width: 14px; height: 14px; margin: 0 2px; border-radius: 50%; }
.listwrap i.green { background: #489a08; }
.listwrap i.red { background: #f00; }
.listwrap span { flex: 1; display: flex; align-items: center; justify-content: space-between; margin-right: 2px; padding: 0 1px; background: var(--cyan); font-size: 12px; line-height: 14px; }
.white span { background: #fff !important; }
.drill span { background: #9bb4c0 !important; }
.drill .rout span { background: #dadada !important; }
.vscroll { width: 14px; display: flex; flex-direction: column; background: #45ab94; border-left: 2px solid var(--green-d); border-right: 1px solid var(--green-l); }
.vscroll svg { width: 11px; height: 12px; }
.trough { flex: 1; display: flex; }
.vscroll .trough { flex-direction: column; justify-content: flex-end; }
.trough b { background: var(--green); border: 2px solid; border-color: var(--green-l) var(--green-d) var(--green-d) var(--green-l); }
.vscroll b { height: 77%; }
.selected { height: 19px; border: 1px solid #000; background: var(--orange); font-size: 12px; line-height: 16px; padding-left: 2px; }

.canvas { position: relative; flex: 1; overflow: hidden; background: #000; }
.board { position: relative; width: 100%; height: 100%; pointer-events: none; }
.route { fill: none; stroke: #b89a20; stroke-width: 1.5px; shape-rendering: crispEdges; }
.panel { fill: none; stroke: #b0923c; stroke-width: 2px; shape-rendering: crispEdges; }
.panel.thin { stroke-width: 1px; }
.cut { fill: none; stroke: #d01818; shape-rendering: crispEdges; }
.cut.wide { stroke-width: 2px; }
.holes { position: absolute; left: 198px; top: 188px; width: 845px; table-layout: fixed; border-collapse: collapse; border: 1px solid #d01818; }
.holes th, .holes td { padding: 2px 0 0; font: 12px/13px "Liberation Mono", monospace; color: #f01414; text-align: center; white-space: nowrap; }
.holes th { height: 30px; padding-top: 3px; border-bottom: 1px solid #d01818; }
.holes td { height: 15px; }
.holes th:nth-child(7), .holes td:nth-child(7) { padding-left: 8px; }
.holes tr:last-child td { height: 22px; padding-bottom: 4px; }
.h1 { width: 76px; } .h2 { width: 154px; } .h3 { width: 136px; } .h4 { width: 76px; } .h5 { width: 92px; } .h6 { width: 213px; } .h7 { width: 97px; }

/* tool palette */
.right { width: 160px; flex: none; display: flex; flex-direction: column; overflow: hidden; background: var(--green); border-left: 2px solid var(--green-d); }
.tools { display: grid; grid-template-columns: repeat(4, 38px); gap: 2px; padding: 1px; background: #000; flex: none; }
.view { margin-top: 2px; border-bottom: 2px solid var(--green-l); }
.edit { padding-top: 3px; margin-top: 0; border-bottom: 3px solid var(--green-d); }
.tools button { width: 38px; height: 38px; border: 3px solid; background: var(--cyan); border-color: #c2f0f0 #6a9c9c #6a9c9c #c2f0f0; }
.tools svg { width: 32px; height: 32px; }
.edit button { background: #cfcfcf; border-color: #e8e4e4 #8a8a8a #8a8a8a #e8e4e4; }
.tools .alert { border-color: #b82424 #901818 #901818 #b82424; }
.edit .w { background: #fff; border-color: #fff #b0b0b0 #b0b0b0 #fff; }
.edit .active { border-color: #a8a4a4 #fff #fff #a8a4a4; }
.edit .o { background: var(--orange); border-color: #ffe49c #a8802c #a8802c #ffe49c; }
.tiny { font: 7px "Liberation Sans", sans-serif; }
.ratio { font: bold 15px "Liberation Sans", sans-serif; }
.quest { font: bold 16px "Liberation Sans", sans-serif; }
.overview { flex: 1; min-height: 0; background: #000; border-bottom: 2px solid var(--green-l); }
.overview svg { width: 100%; height: 100%; }
.coords { display: flex; flex-direction: column; height: 45px; padding: 5px 2px 0; white-space: nowrap; border-top: 2px solid var(--green-d); border-bottom: 2px solid var(--green-l); flex: none; }

/* coordinate entry */
.xybar { display: flex; height: 34px; flex: none; background: var(--yellow); border-bottom: 2px solid #000; margin-left: 5px; }
.xybar > button { width: 32px; height: 32px; padding: 3px; border: 1px solid; border-color: transparent #000 transparent transparent; }
.xybar > button svg { width: 24px; height: 24px; padding: 1px; border: 1px solid; border-color: #e4e4b0 #8c8c6c #8c8c6c #e4e4b0; }
.xybar .on { width: 29px; padding: 3px 2px; background: var(--green); }
.xybar .on svg { background: var(--yellow); border-color: #8c8c6c #e4e4b0 #e4e4b0 #8c8c6c; }
.xybar label { width: 48px; font-size: 12px; line-height: 32px; padding-left: 4px; white-space: nowrap; }
.xybar input { width: 276px; height: 28px; margin: 2px 5px 0 2px; border: 2px solid; border-color: var(--yellow-d) #e4e4b0 #e4e4b0 var(--yellow-d); }
.hint { font-size: 12px; line-height: 33px; padding-left: 3px; }
.unit { margin-left: auto; width: 76px; border-left: 2px solid #000; background: var(--green); padding: 3px 0 3px 6px; }
.unit select { padding-left: 4px; }

input[type="text"] { font-family: "Liberation Mono", monospace; background-image: repeating-linear-gradient(#000 0 1px, transparent 1px 2px); background-repeat: no-repeat; background-size: 1px 14px; background-position: 3px 2px; padding: 0 0 6px 4px; min-width: 0; }

.msg { height: 38px; flex: none; padding: 0 0 9px 6px; background: var(--face); border-top: 2px solid #777; border-bottom: 2px solid #b4c4dc; }
.msg div { height: 27px; background: var(--pale); border: 1px solid #000; box-shadow: inset 3px 2px 0 #dcffff, inset -3px -2px 0 #dcffff, inset 0 -4px 0 #6aa0a0; }

/* option menus */
.pick { position: relative; display: block; border: 2px solid; border-color: var(--pl) var(--pd) var(--pd) var(--pl); background: var(--pb); height: 27px; --pl: var(--green-l); --pd: var(--green-d); --pb: var(--green); }
.pick select { appearance: none; width: 100%; height: 100%; padding-left: 3px; }
.pick::after { content: ""; position: absolute; right: 6px; top: 8px; width: 12px; height: 7px; border: 2px solid; border-color: var(--pl) var(--pd) var(--pd) var(--pl); pointer-events: none; }

/* dialog */
.dialog { position: absolute; left: 441px; top: 414px; width: 772px; bottom: 68px; display: flex; flex-direction: column; background: var(--green); border: solid var(--face); border-width: 4px 4px 0; box-shadow: inset 1px 1px 0 #fff; }
.dtitle { display: flex; align-items: center; height: 19px; padding: 0 1px 0 2px; background: linear-gradient(90deg, #0a246a, #a6caf0); flex: none; }
.dtitle h2 { color: #fff; }
.dbody { flex: 1; min-height: 0; display: flex; flex-direction: column; padding-top: 1px; }
.params { width: 613px; }
.prow { display: flex; height: 33px; }
.prow.second { height: 30px; }
.box { display: flex; align-items: center; border: 1px solid #000; background: var(--cyan); white-space: nowrap; }
.greenbox { background: var(--green); padding: 2px; }
.motif { display: flex; justify-content: space-between; align-items: center; width: 100%; height: 100%; border: 2px solid; border-color: var(--green-l) var(--green-d) var(--green-d) var(--green-l); }
.greenbox .motif { background: var(--cyan); padding: 0 12px 0 1px; border-color: var(--cyan-l) var(--cyan-d) var(--cyan-d) var(--cyan-l); }
.layerbox { width: 167px; } .layerval { width: 109px; padding: 2px; }
.box input { width: 100%; height: 100%; border: 2px solid; border-color: var(--cyan-d) var(--cyan-l) var(--cyan-l) var(--cyan-d); }
.slots { margin-left: auto; width: 186px; padding: 2px 1px 2px 8px; justify-content: space-between; }
.slots .pick { width: 114px; --pl: var(--cyan-l); --pd: var(--cyan-d); --pb: var(--cyan); }
.slots select { padding-left: 29px; }
.thick { width: 307px; gap: 3px; padding: 2px 0 2px 1px; }
.thick label { width: 164px; }
.thick input { width: 104px; height: 23px; }
.user { width: 176px; } .userval { width: 127px; margin-left: auto; padding: 2px; }
.prow.second .motif { padding: 0 0 0 2px; }
.gridview { flex: 1; min-height: 0; overflow: hidden; margin: 0 2px 4px 2px; border: 2px solid; border-color: var(--green-d) var(--green-l) var(--green-l) var(--green-d); }
.grid { table-layout: fixed; width: 833px; border-collapse: separate; border-spacing: 0; }
.grid th { height: 36px; padding: 0; background: var(--pale); border: solid #000; border-width: 1px 2px 1px 0; font: bold 15px/15px "Liberation Mono", monospace; }
.grid tbody::before { content: ""; display: table-row; height: 2px; }
.grid td { height: 33px; padding: 2px; border: solid #000; border-width: 0 2px 2px 0; vertical-align: middle; }
.grid tbody tr:first-child td { border-top: 2px solid #000; height: 34px; padding-bottom: 1px; }
.grid td:first-child, .grid th:first-child { border-left: 2px solid #000; }
.grid td .motif { height: 27px; padding-left: 1px; }
.grid .sel { background: var(--orange); }
.grid .num { text-align: right; padding-right: 2px; }
.grid .wh, .grid .focus { background: #fff; }
.grid .ye { background: var(--yellow); }
.grid .focus { background: #000; }
.grid .focus input { background-color: #fff; background-image: linear-gradient(#000, #000); }
.grid input { display: block; width: 100%; height: 27px; border: 2px solid; border-color: #999 #ccc #ccc #999; }
.grid .ye input { border-color: var(--yellow-d) #d0d0a4 #d0d0a4 var(--yellow-d); }
.grid .ye .pick { margin: 0 2px 0 4px; --pl: #e0e0b4; --pd: #a3a383; --pb: var(--yellow); }
.grid .cut-off { text-align: left; padding-left: 1px; }
.sym { width: 20px; height: 20px; }
.g1 { width: 28px; } .g2 { width: 67px; } .g3 { width: 60px; } .g4 { width: 83px; } .g5 { width: 114px; } .g6 { width: 74px; }
.hscroll { display: flex; height: 13px; margin: 0 2px 3px; background: #45ab94; border-top: 2px solid var(--green-d); }
.hscroll svg { width: 12px; height: 11px; }
.hscroll b { width: 91%; }

.note { position: absolute; left: 204px; top: 534px; width: 228px; bottom: 15px; border: 3px solid #0000d8; background: #fff; color: #e0107c; font: 500 21px/30px "Noto Sans CJK SC", sans-serif; text-align: center; padding-right: 3px; }
.marks { position: absolute; inset: 0; width: 100%; height: 100%; pointer-events: none; }

/* taskbar */
.taskbar { display: flex; height: 68px; flex: none; background: var(--face); border-top: 1px solid #f4f2ee; overflow: hidden; }
.taskbar, .taskbar button { font: 12px/18px "DejaVu Sans Condensed", "Noto Sans CJK SC", sans-serif; white-space: nowrap; }
.taskbar .en { font-size: 11px; }
.taskbar button { background: var(--face); border: 1px solid; border-color: #fff #404040 #404040 #fff; box-shadow: inset -1px -1px 0 #808080; }
.start { width: 107px; padding: 2px 0 0 2px; border-right: 1px solid #808080; flex: none; }
.start button { display: flex; align-items: center; width: 47px; height: 22px; padding: 0 2px; }
.start button svg { width: 15px; height: 15px; flex: none; }
.orbs { width: 18px; height: 18px; margin: 4px 0 0 65px; }
.tasks { width: 1289px; padding: 2px 8px 0 9px; flex: none; display: flex; flex-direction: column; gap: 2px; }
.row { display: flex; gap: 2px; height: 22px; flex: none; }
.row + .row { height: 23px; }
.t { display: flex; align-items: center; gap: 4px; flex: 1; min-width: 0; padding: 0 3px; text-align: left; overflow: hidden; }
.t svg { width: 16px; height: 16px; flex: none; }
.wide { flex: none; width: 157px; }
.taskbar .dark { background: #0a246a; color: #fff; border-color: #404040 #fff #fff #404040; box-shadow: none; }
.quick { display: flex; align-items: center; gap: 18px; width: 66px; padding-left: 8px; flex: none; }
.quick svg { width: 16px; height: 16px; }
.calc { width: 160px; padding: 0 4px; flex: none; }
.calc svg { width: 14px; height: 16px; }
.cmd { width: 154px; text-align: right; padding-right: 7px; flex: none; }
.word { width: 16px; height: 18px; margin: 2px 9px; flex: none; }
.ime { width: 30px; border-left: 2px solid #fff; padding: 2px 0 0 8px; flex: none; }
.ime svg { width: 16px; height: 40px; }
.tray { flex: 1; display: flex; margin: 2px 3px 0 0; border: 1px solid; border-color: #808080 #fff #fff #808080; padding-left: 5px; }
.chev { width: 7px; height: 10px; margin-top: 5px; flex: none; }
.icons { display: grid; grid-template-columns: repeat(3, 18px); grid-auto-rows: 18px; gap: 4px 6px; padding: 3px 0 0 9px; align-content: start; flex: none; }
.icons svg { width: 18px; height: 18px; }
.clock { flex: 1; display: flex; flex-direction: column; align-items: center; padding-top: 6px; font-size: 11px; line-height: 19px; }
.mon { width: 16px; height: 14px; margin: 28px 1px 0 0; flex: none; }
```
